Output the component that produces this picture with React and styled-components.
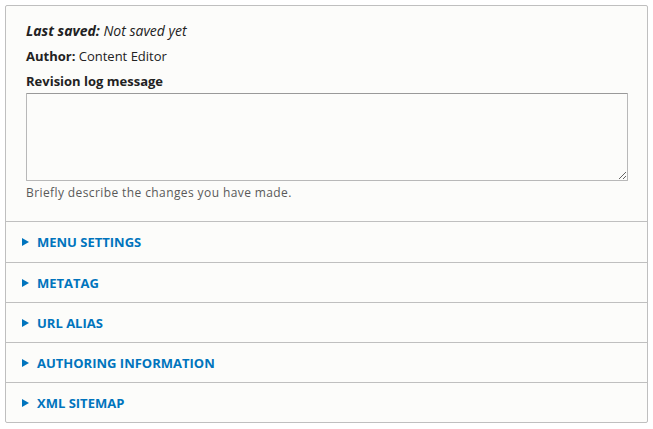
import React from 'react';
import styled, { createGlobalStyle } from 'styled-components';

const GlobalStyle = createGlobalStyle`
  body {
    margin: 0;
    background: #fff;
    font-family: "Open Sans", "DejaVu Sans", sans-serif;
    color: #222;
  }
`;

const Panel = styled.div`
  margin: 5px;
  width: 643px;
  border: 1px solid #bfbfbf;
  border-radius: 2px;
  background: #fcfcfa;
  box-sizing: border-box;
`;

const Meta = styled.div`
  padding: 16px 20px 19px 20px;
  border-bottom: 1px solid #bfbfbf;
`;

const Line = styled.div`
  font-size: ${p => (p.italic ? '14px' : '13px')};
  line-height: 18px;
  margin-bottom: 7px;
  font-style: ${p => (p.italic ? 'italic' : 'normal')};
`;

const Label = styled.span`
  font-weight: bold;
`;

const FieldLabel = styled.div`
  font-size: 13px;
  font-weight: bold;
  line-height: 18px;
  margin-bottom: 3px;
`;

const TextArea = styled.textarea`
  display: block;
  width: 602px;
  height: 88px;
  box-sizing: border-box;
  border: 1px solid #b8b8b8;
  border-top-color: #999;
  border-radius: 1px;
  background: #fcfcfa;
  resize: vertical;
  margin: 0;
  font-family: inherit;
`;

const Description = styled.div`
  font-size: 12px;
  line-height: 18px;
  color: #595959;
  letter-spacing: 0.4px;
  margin-top: 3px;
`;

const Row = styled.div`
  height: 40px;
  display: flex;
  align-items: center;
  padding-left: 16px;
  border-top: ${p => (p.first ? 'none' : '1px solid #bfbfbf')};
  box-sizing: border-box;
  color: #0074bd;
  font-size: 13px;
  font-weight: bold;
  text-transform: uppercase;
  cursor: pointer;
`;

const Arrow = styled.span`
  width: 0;
  height: 0;
  border-top: 4px solid transparent;
  border-bottom: 4px solid transparent;
  border-left: 7px solid #0074bd;
  margin-right: 8px;
`;

const sections = [
  'Menu settings',
  'Metatag',
  'URL alias',
  'Authoring information',
  'XML sitemap',
];

const App = () => (
  <>
    <GlobalStyle />
    <Panel>
      <Meta>
        <Line italic><Label>Last saved:</Label> Not saved yet</Line>
        <Line><Label>Author:</Label> Content Editor</Line>
        <FieldLabel>Revision log message</FieldLabel>
        <TextArea />
        <Description>Briefly describe the changes you have made.</Description>
      </Meta>
      {sections.map((s, i) => (
        <Row key={s} first={i === 0}>
          <Arrow />
          {s}
        </Row>
      ))}
    </Panel>
  </>
);

export default App;
